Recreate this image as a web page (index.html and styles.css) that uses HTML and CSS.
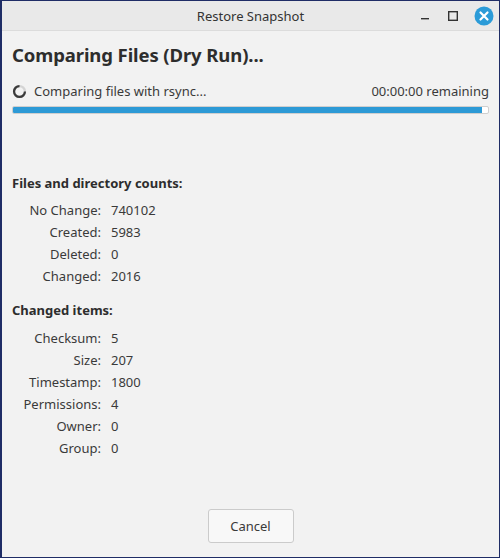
FILE: index.html
```html
<!DOCTYPE html>
<html>
<head>
<meta charset="utf-8">
<link rel="stylesheet" href="styles.css">
</head>
<body>
<div class="window">
  <div class="titlebar">
    <div class="title">Restore Snapshot</div>
    <div class="controls">
      <svg class="ctl" width="14" height="14" viewBox="0 0 14 14"><rect x="3" y="9" width="8" height="1.4" fill="#333"/></svg>
      <svg class="ctl" width="14" height="14" viewBox="0 0 14 14"><rect x="2.7" y="2.7" width="8.6" height="8.6" fill="none" stroke="#333" stroke-width="1.4"/></svg>
      <svg class="close" width="20" height="20" viewBox="0 0 20 20"><circle cx="10" cy="10" r="9.5" fill="#2b9bd8"/><path d="M6.5 6.5 L13.5 13.5 M13.5 6.5 L6.5 13.5" stroke="#fff" stroke-width="2.2" stroke-linecap="round"/></svg>
    </div>
  </div>
  <div class="content">
    <h1 class="heading">Comparing Files (Dry Run)...</h1>
    <div class="status">
      <svg class="spinner" width="15" height="15" viewBox="0 0 16 16">
        <circle cx="8" cy="8" r="5.8" fill="none" stroke="#d4d4d4" stroke-width="2.4"/>
        <path d="M8 2.2 A5.8 5.8 0 1 0 13.8 8" fill="none" stroke="#3a3a3a" stroke-width="2.4"/>
      </svg>
      <span class="msg">Comparing files with rsync...</span>
      <span class="remaining">00:00:00 remaining</span>
    </div>
    <div class="progress"><div class="fill" style="width:98.8%"></div></div>

    <div class="section-title first">Files and directory counts:</div>
    <div class="grid">
      <span class="lbl">No Change:</span><span class="val">740102</span>
      <span class="lbl">Created:</span><span class="val">5983</span>
      <span class="lbl">Deleted:</span><span class="val">0</span>
      <span class="lbl">Changed:</span><span class="val">2016</span>
    </div>

    <div class="section-title">Changed items:</div>
    <div class="grid second">
      <span class="lbl">Checksum:</span><span class="val">5</span>
      <span class="lbl">Size:</span><span class="val">207</span>
      <span class="lbl">Timestamp:</span><span class="val">1800</span>
      <span class="lbl">Permissions:</span><span class="val">4</span>
      <span class="lbl">Owner:</span><span class="val">0</span>
      <span class="lbl">Group:</span><span class="val">0</span>
    </div>

    <div class="footer">
      <button class="btn">Cancel</button>
    </div>
  </div>
</div>
</body>
</html>
```

FILE: styles.css
```css
html, body {
  margin: 0;
  padding: 0;
}
body {
  width: 500px;
  height: 558px;
  font-family: "Noto Sans", "DejaVu Sans", sans-serif;
  color: #3a3a3a;
  background: #f2f2f2;
}
.window {
  box-sizing: border-box;
  width: 500px;
  height: 558px;
  border: 1px solid #1f2d66;
  border-left-width: 2px;
  background: #f2f2f2;
  display: flex;
  flex-direction: column;
}
.titlebar {
  height: 29px;
  flex: none;
  background: #e9e9e9;
  border-bottom: 1px solid #dcdcdc;
  position: relative;
  display: flex;
  align-items: center;
  justify-content: center;
}
.title {
  font-size: 13px;
  color: #333;
}
.controls {
  position: absolute;
  right: 5px;
  top: 5px;
  display: flex;
  align-items: center;
  gap: 14px;
}
.ctl {
  display: block;
}
.close {
  display: block;
}
.content {
  flex: 1;
  padding: 0 10px 0 10px;
  display: flex;
  flex-direction: column;
}
.heading {
  margin: 10px 0 0 0;
  font-size: 18.5px;
  font-weight: bold;
  color: #2d2d2d;
  line-height: 28px;
  letter-spacing: -0.1px;
}
.status {
  margin-top: 13px;
  display: flex;
  align-items: center;
  font-size: 13px;
  line-height: 18px;
}
.spinner {
  margin-right: 7px;
  display: block;
}
.msg {
  flex: 1;
}
.remaining {
  color: #3a3a3a;
}
.progress {
  margin-top: 6px;
  height: 6px;
  border: 1px solid #cfcfcf;
  background: #fff;
  border-radius: 2px;
  overflow: hidden;
}
.fill {
  height: 100%;
  background: #2d9ad6;
}
.section-title {
  font-size: 13px;
  font-weight: bold;
  color: #2d2d2d;
  margin-top: 16px;
  line-height: 18px;
}
.section-title.first {
  margin-top: 60px;
}
.grid {
  display: grid;
  grid-template-columns: 89px auto;
  column-gap: 10px;
  row-gap: 4px;
  margin-top: 9px;
  font-size: 13px;
  line-height: 18px;
}
.grid.second {
  margin-top: 10px;
}
.lbl {
  text-align: right;
}
.val {
  text-align: left;
}
.footer {
  margin-top: auto;
  margin-bottom: 14px;
  display: flex;
  justify-content: center;
}
.btn {
  font-family: inherit;
  font-size: 13px;
  color: #3a3a3a;
  width: 86px;
  height: 34px;
  background: #f8f8f8;
  border: 1px solid #cbcbcb;
  border-radius: 3px;
}
```
